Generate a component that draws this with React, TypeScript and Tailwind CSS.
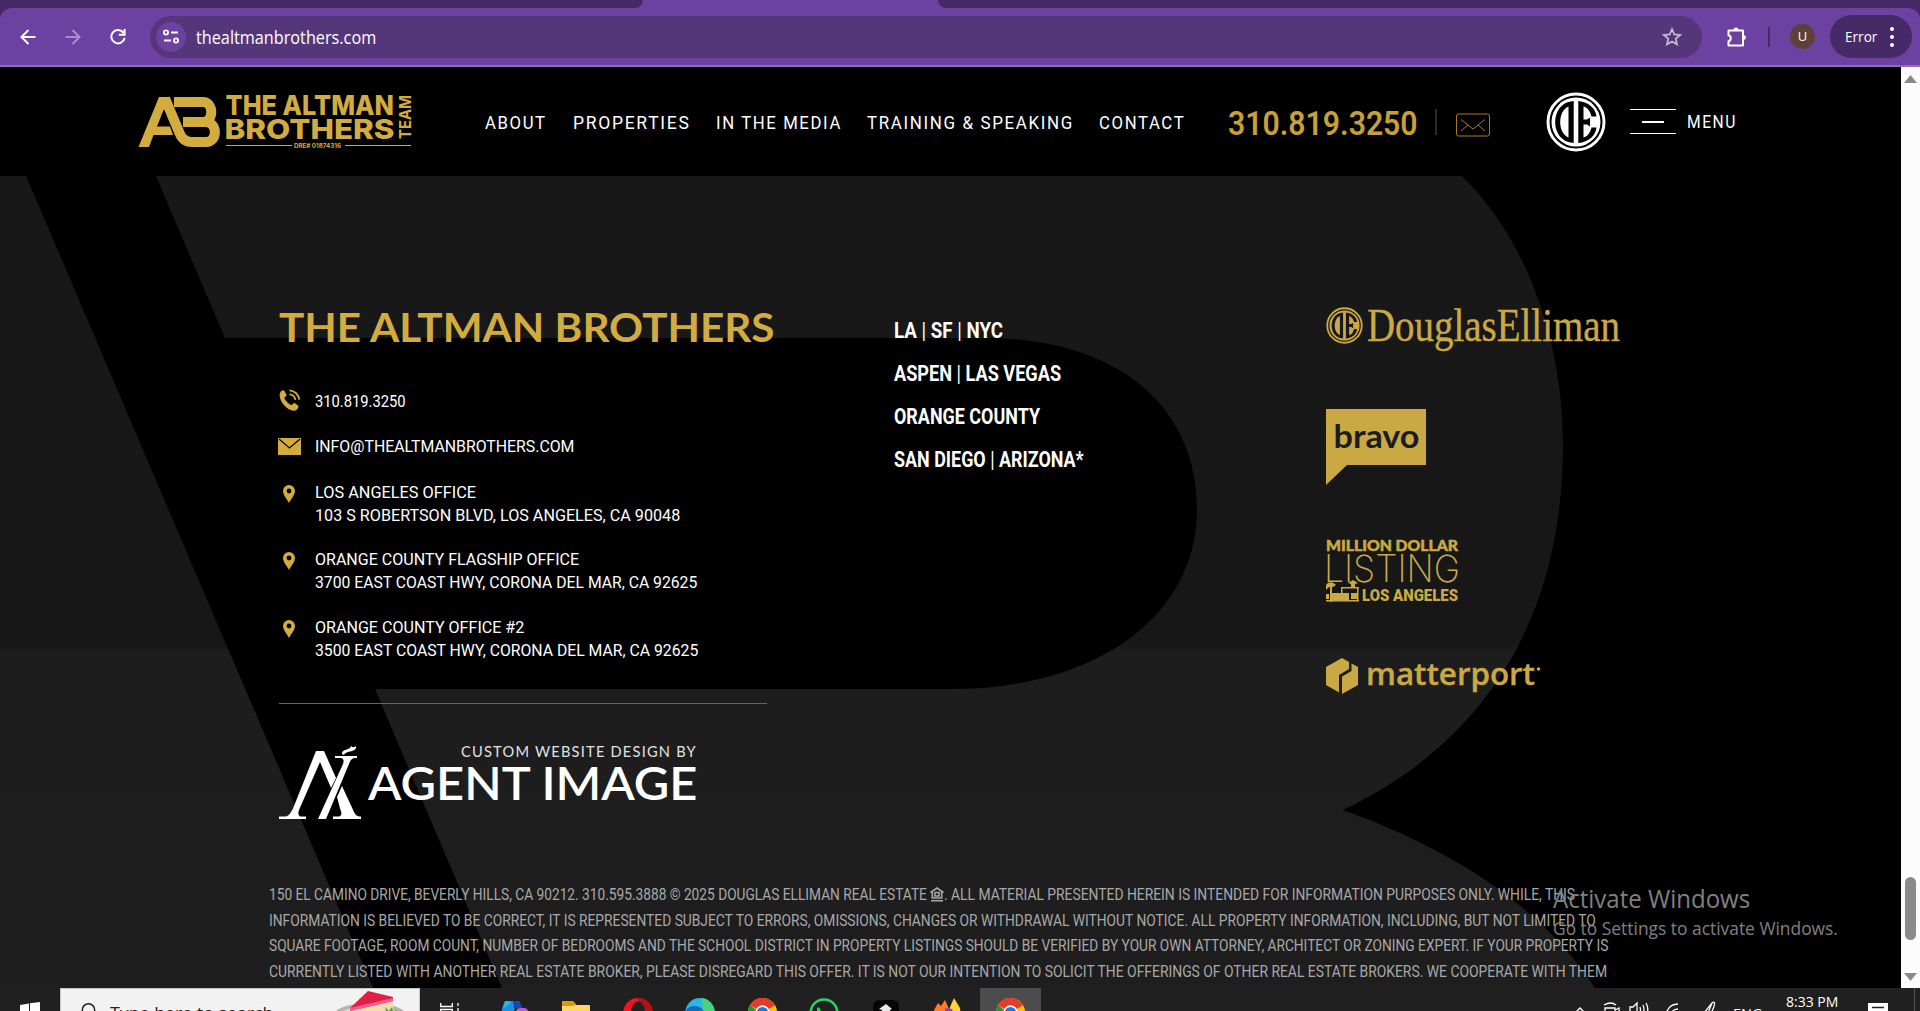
import { useLayoutEffect, useRef, type ReactNode } from "react";

/** Single line of text, condensed or widened to fill the width set in className. */
function Line({ className, children }: { className: string; children: ReactNode }) {
  const box = useRef<HTMLDivElement>(null);
  const text = useRef<HTMLSpanElement>(null);
  useLayoutEffect(() => {
    if (box.current && text.current) {
      const ratio = box.current.clientWidth / text.current.offsetWidth;
      text.current.style.transform = `scaleX(${ratio})`;
    }
  }, []);
  return (
    <div ref={box} className={`shrink-0 whitespace-nowrap ${className}`}>
      <span ref={text} className="inline-block origin-left">
        {children}
      </span>
    </div>
  );
}

function Emblem({ className }: { className: string }) {
  return (
    <svg viewBox="0 0 60 60" className={className} fill="currentColor">
      <circle cx="30" cy="30" r="28" fill="none" stroke="currentColor" strokeWidth="3" />
      <path
        fillRule="evenodd"
        d="M30 5.500a24.500 24.500 0 1 1 0 49 24.500 24.500 0 1 1 0-49ZM27.700 9C3 10 3 50 27.700 51ZM22.500 14.500C11.500 19 11.500 41 22.500 45.500ZM32.300 9V51C43 50 49.500 43.500 50.500 35.500H45.500C44.500 40.500 41.500 44.500 37.500 45.500V32.500H41L44 34.500V25.500L41 27.500H37.500V14.500C41.500 15.500 44.500 19.500 45.500 24.500H50.500C49.500 16.500 43 10 32.300 9Z"
      />
    </svg>
  );
}

function BrandLogo() {
  return (
    <svg width="274" height="54" viewBox="138 95 274 54" className="ml-[138px] shrink-0 overflow-visible tracking-normal" fill="#d3ac3f">
      <path d="M138.500 147 159 97H169L172 105 163.500 110 157 126.500H170L173 135H153.500L149 147Z" />
      <path
        d="M165 98.500 179.500 133Q183 142 192 142H206C218 142 218 122 205 122H183M174 102H203C214 102 214 122 203 122"
        fill="none"
        stroke="#d3ac3f"
        strokeWidth="10"
      />
      <g fontFamily="'Inter','Liberation Sans',sans-serif" fontWeight="700">
        <text x="225.500" y="115.300" fontSize="27.500" fontWeight="800" textLength="168.500" lengthAdjust="spacingAndGlyphs">THE ALTMAN</text>
        <text x="224.500" y="139" fontSize="27.500" fontWeight="800" textLength="170" lengthAdjust="spacingAndGlyphs">BROTHERS</text>
        <text x="294" y="147.500" fontSize="6" textLength="47" lengthAdjust="spacingAndGlyphs">DRE# 01874316</text>
        <text transform="translate(411 139) rotate(-90)" fontSize="16.500" textLength="44" lengthAdjust="spacingAndGlyphs">TEAM</text>
      </g>
      <path d="M226 145h66v1h-66zM345 145h66v1h-66z" />
    </svg>
  );
}

function BrowserBar() {
  return (
    <div className="h-[67px] shrink-0 bg-[#462a68] font-['Open_Sans','Noto_Sans',sans-serif] text-white">
      <div className="flex h-2">
        <div className="w-[631px]" />
        <div className="w-3 bg-[#6c41a1]">
          <div className="h-2 w-3 rounded-br-xl bg-[#462a68]" />
        </div>
        <div className="w-[295px] bg-[#6c41a1]" />
        <div className="w-3 bg-[#6c41a1]">
          <div className="h-2 w-3 rounded-bl-xl bg-[#462a68]" />
        </div>
      </div>
      <div className="flex h-[59px] items-center rounded-t-xl border-b-2 border-[#916bbb] bg-[#6c41a1]">
        <svg width="16" height="16" viewBox="0 0 16 16" className="ml-5 shrink-0" fill="none" stroke="#fff" strokeWidth="2">
          <path d="M8.500 1 1.500 8l7 7M2 8h13.500" />
        </svg>
        <svg width="16" height="16" viewBox="0 0 16 16" className="ml-[29px] shrink-0" fill="none" stroke="#a98fca" strokeWidth="2">
          <path d="m7.500 1 7 7-7 7M14 8H.5" />
        </svg>
        <svg width="16" height="16" viewBox="0 0 16 16" className="ml-[29px] shrink-0" fill="none" stroke="#fff" strokeWidth="2">
          <path d="M13.500 3.800A6.700 6.700 0 1 0 14.600 9M14.600 0v5.800H8.800" />
        </svg>
        <div className="ml-6 flex h-[42px] w-[1552px] items-center rounded-full bg-[#56367a]">
          <div className="ml-[6px] flex size-[30px] items-center justify-center rounded-full bg-[#6c41a1]">
            <svg width="16" height="15" viewBox="0 0 16 15" fill="none" stroke="#fff" strokeWidth="1.800">
              <circle cx="3" cy="3.500" r="2.100" />
              <path d="M8 3.500h7M1 11.500h7" />
              <circle cx="13" cy="11.500" r="2.100" />
            </svg>
          </div>
          <Line className="ml-[10px] w-[180px] text-[17.5px] leading-[42px]">thealtmanbrothers.com</Line>
          <svg width="20" height="20" viewBox="0 0 20 20" className="ml-auto mr-5" fill="none" stroke="#c3b9ce" strokeWidth="1.800">
            <path d="m10 2.200 2.300 5.300 5.700.5-4.300 3.800 1.300 5.700-5-3-5 3 1.300-5.700L2 8l5.700-.5z" />
          </svg>
        </div>
        <svg width="22" height="22" viewBox="0 0 22 22" className="ml-6 shrink-0" fill="none" stroke="#fff" strokeWidth="2">
          <path d="M2.500 4.500h14.500v15H2.500v-4.300c3-.5 3-5.400 0-5.900z" strokeLinejoin="round" />
          <path d="M7.500 4a2.500 2.500 0 0 1 5 0zM17.500 9a2.500 2.500 0 0 1 0 5z" fill="#fff" stroke="none" />
        </svg>
        <div className="ml-5 h-5 w-[2px] bg-[#462a68]" />
        <div className="ml-5 flex size-[25px] items-center justify-center rounded-full bg-[#5d4037] text-[13px]">U</div>
        <div className="ml-[15px] flex h-[43px] w-[82px] items-center rounded-full bg-[#462a68]">
          <Line className="ml-[15px] w-8 text-[14px]">Error</Line>
          <div className="ml-[13px] flex flex-col gap-1">
            <div className="size-1 rounded-full bg-white" />
            <div className="size-1 rounded-full bg-white" />
            <div className="size-1 rounded-full bg-white" />
          </div>
        </div>
      </div>
    </div>
  );
}

function SiteHeader() {
  return (
    <header className="flex h-[109px] shrink-0 items-center bg-black text-[17.5px] leading-6 tracking-[1.7px] text-white">
      <BrandLogo />
      <nav className="ml-[73px] mt-[3px] flex">
        <Line className="w-[62px]">ABOUT</Line>
        <Line className="ml-[26px] w-[118px]">PROPERTIES</Line>
        <Line className="ml-[25px] w-[126px]">IN THE MEDIA</Line>
        <Line className="ml-[25px] w-[207px]">TRAINING &amp; SPEAKING</Line>
        <Line className="ml-[25px] w-[86px]">CONTACT</Line>
      </nav>
      <Line className="ml-[43px] mt-[3px] w-[190px] text-[34px] font-semibold leading-[40px] tracking-normal text-[#c8a03a]">310.819.3250</Line>
      <div className="ml-[17px] h-[26px] w-[2px] bg-[#2b2b2b]" />
      <svg width="34" height="24" viewBox="0 0 34 24" className="ml-[19px] mt-[7px] shrink-0" fill="none" stroke="#a87a1c">
        <rect x=".5" y="1" width="33" height="22" rx="2" />
        <path d="m5 6.500 12 9.500 12-9.500M5 18l7-6M29 18l-7-6" />
      </svg>
      <Emblem className="ml-[56px] mt-px size-[60px] shrink-0 text-white" />
      <div className="ml-6 flex h-[25px] w-[46px] flex-col items-center justify-between">
        <div className="h-px w-full bg-white" />
        <div className="h-[2px] w-[22px] bg-white" />
        <div className="h-px w-full bg-white" />
      </div>
      <Line className="ml-[11px] mt-px w-[50px]">MENU</Line>
    </header>
  );
}

/** Oversized monogram behind the footer. */
function Backdrop() {
  return (
    <svg width="1901" height="812" viewBox="0 176 1901 812" className="absolute inset-0">
      <defs>
        <linearGradient id="tone" x1="0" y1="176" x2="0" y2="988" gradientUnits="userSpaceOnUse">
          <stop offset="0" stopColor="#181818" />
          <stop offset=".575" stopColor="#171717" />
          <stop offset=".588" stopColor="#1d1d1d" />
          <stop offset="1" stopColor="#1e1e1e" />
        </linearGradient>
      </defs>
      <g fill="url(#tone)">
        <path d="M0 176H26L373 988H0Z" />
        <path d="M156 176H1462C1532 245 1563 350 1563 445C1563 600 1500 735 1343 810C1455 850 1545 910 1595 988H502L375 689H950C1105 689 1197 610 1197 510C1197 400 1110 338 985 338H225Z" />
      </g>
    </svg>
  );
}

function Pin() {
  return (
    <svg width="12" height="18" viewBox="0 0 12 18" className="ml-1 mr-5 mt-1 shrink-0" fill="#d3ac3f">
      <path fillRule="evenodd" d="M6 0a6 6 0 0 1 6 6c0 4-4 8-6 12C4 14 0 10 0 6a6 6 0 0 1 6-6Zm0 3.600a2.400 2.400 0 1 0 0 4.800 2.400 2.400 0 0 0 0-4.800Z" />
    </svg>
  );
}

function ContactColumn() {
  return (
    <div className="ml-[279px] w-[615px] shrink-0 text-[17px] leading-[23px] text-white">
      <Line className="mt-[127px] w-[496px] font-['Lato',sans-serif] text-[41px] font-bold leading-[47px] text-[#d3ac3f]">THE ALTMAN BROTHERS</Line>
      <div className="mt-[40px] flex h-[23px]">
        <svg width="22" height="22" viewBox="0 0 22 22" className="mr-3.5 shrink-0 -translate-y-px" fill="#d3ac3f">
          <path d="M1 4C2 1.500 4.500.5 5.500 2l2 4c.5 1-2 2-2 3 0 2 5 7 7 7 1 0 2-2.500 3-2l3.500 2.500c1.500 1-.5 4-2.500 5C9 23.500-1.500 11 1 4Z" />
          <path d="M10.500 1.300c5 .2 9.500 4.500 9.800 9.500M10.500 5.300c3 .2 5.500 2.500 5.800 5.500" fill="none" stroke="#d3ac3f" strokeWidth="1.800" />
        </svg>
        <Line className="w-[91px]">310.819.3250</Line>
      </div>
      <div className="mt-[22px] flex h-[23px] items-center">
        <svg width="23" height="17" viewBox="0 0 23 17" className="mr-3.5 shrink-0 -translate-x-px" fill="#d3ac3f">
          <path d="M0 0h23v17H0z" />
          <path d="m1 1 10.500 9L22 1" fill="none" stroke="#000" strokeWidth="1.200" />
        </svg>
        <Line className="-ml-px w-[259px]">INFO@THEALTMANBROTHERS.COM</Line>
      </div>
      <div className="mt-[23px] flex">
        <Pin />
        <div>
          <Line className="w-[161px]">LOS ANGELES OFFICE</Line>
          <Line className="w-[365px]">103 S ROBERTSON BLVD, LOS ANGELES, CA 90048</Line>
        </div>
      </div>
      <div className="mt-[21px] flex">
        <Pin />
        <div>
          <Line className="w-[264px]">ORANGE COUNTY FLAGSHIP OFFICE</Line>
          <Line className="w-[382px]">3700 EAST COAST HWY, CORONA DEL MAR, CA 92625</Line>
        </div>
      </div>
      <div className="mt-[22px] flex">
        <Pin />
        <div>
          <Line className="w-[209px]">ORANGE COUNTY OFFICE #2</Line>
          <Line className="w-[383px]">3500 EAST COAST HWY, CORONA DEL MAR, CA 92625</Line>
        </div>
      </div>
      <div className="mt-[41px] h-px w-[488px] bg-[#746538]" />
      <div className="mt-[41px] flex font-['Lato',sans-serif]">
        <svg width="82" height="75" viewBox="0 0 82 75" className="shrink-0" fill="#fff">
          <path d="M0 71.500h7c3-1 5-4 7-8L37 6h8l12 27-5 10-11-26-21 48c-1 3-1 5 1 6.500h6V74H0Z" />
          <path d="M56 11h22v2h-3c-3 1-4 3-5 6L47 74h-8l25-55c1-3 1-5-2-6h-6ZM58 52l5-11 12 26c1.500 3 3 4.500 7 4.500V74H54v-2.500h6c3-1 3-3 1-8Z" />
          <path d="M63 9c-1-5 9-4 9-8 2 2 4 1 5 0 1 7-10 4-12 9Z" />
        </svg>
        <div className="ml-[7px]">
          <Line className="ml-[93px] w-[236px] text-[14.5px] leading-[13px] tracking-[1.2px] text-[#e2e2e2]">CUSTOM WEBSITE DESIGN BY</Line>
          <Line className="w-[329px] text-[46px] font-semibold leading-[49px]">AGENT IMAGE</Line>
        </div>
      </div>
    </div>
  );
}

function MarketList() {
  const bar = <span className="font-normal">|</span>;
  return (
    <div className="w-[432px] shrink-0 pt-[133px] text-[21.5px] font-bold leading-[43px] text-white">
      <Line className="w-[109px]">LA {bar} SF {bar} NYC</Line>
      <Line className="w-[167px]">ASPEN {bar} LAS VEGAS</Line>
      <Line className="w-[146px]">ORANGE COUNTY</Line>
      <Line className="w-[190px]">SAN DIEGO {bar} ARIZONA*</Line>
    </div>
  );
}

function PartnersColumn() {
  return (
    <div className="flex shrink-0 flex-col items-start text-[#caa945]">
      <div className="mt-[130px] flex h-[50px]">
        <Emblem className="mt-px size-[37px] shrink-0" />
        <svg width="256" height="50" viewBox="0 0 256 50" className="ml-[3px] overflow-visible" fill="currentColor">
          <text x="1" y="35" fontSize="46" fontFamily="'Liberation Serif',serif" stroke="currentColor" strokeWidth=".4" textLength="253" lengthAdjust="spacingAndGlyphs">DouglasElliman</text>
        </svg>
      </div>
      <svg width="100" height="76" viewBox="0 0 100 76" className="mt-[53px]" fill="currentColor">
        <path d="M0 0h100v56H21L0 76Z" />
        <text x="7.500" y="38.500" fontSize="33" fontWeight="700" fill="#1c1c1c" fontFamily="'Lato',sans-serif" textLength="86" lengthAdjust="spacingAndGlyphs">bravo</text>
      </svg>
      <svg width="134" height="64" viewBox="0 0 134 64" className="mt-[54px] overflow-visible" fill="currentColor">
        <text x="0" y="12" fontSize="14.700" fontWeight="900" fontFamily="'Lato',sans-serif" stroke="currentColor" strokeWidth=".5" textLength="132" lengthAdjust="spacingAndGlyphs">MILLION DOLLAR</text>
        <text x="-2" y="43" fontSize="37.500" fontWeight="200" fontFamily="'Inter',sans-serif" textLength="136" lengthAdjust="spacingAndGlyphs">LISTING</text>
        <text x="36" y="61.500" fontSize="16.500" fontWeight="900" fontFamily="'Roboto',sans-serif" textLength="96" lengthAdjust="spacingAndGlyphs">LOS ANGELES</text>
        <path d="M0 46c3-4 7-3 10 0l-3 2H3l-3 3zM4 48h2v15H4zM6 54h17v7H6zM0 55h3v5H0zM0 61h33v1.500H0zM22 44l5-3 5 3-3 1v3h-4v-3zM15 48h18v1.500H15zM15 48h1.500v6H15zM31 48h1.500v14H31zM25 54h6v6h-6z" />
      </svg>
      <div className="mt-[55px] flex">
        <svg width="32" height="36" viewBox="0 0 32 36" fill="currentColor">
          <path d="M0 9 16 0l7 4v7L13 17v17.500L0 27Z" />
          <path d="M25.500 5.500 32 9v18L16 36V18.500L25.500 13Z" />
        </svg>
        <svg width="180" height="40" viewBox="0 0 180 40" className="ml-[7px]" fill="currentColor">
          <text x="1" y="26.500" fontSize="31" fontWeight="600" fontFamily="'Open Sans',sans-serif" stroke="currentColor" strokeWidth=".4" textLength="169" lengthAdjust="spacingAndGlyphs">matterport</text>
          <circle cx="173.500" cy="11" r="1.800" />
        </svg>
      </div>
    </div>
  );
}

function Disclaimer() {
  return (
    <div className="ml-[269px] mt-[62px] text-[16px] leading-[25.6px] text-[#a9a9a9]">
      <div className="flex">
        <Line className="w-[658px]">150 EL CAMINO DRIVE, BEVERLY HILLS, CA 90212. 310.595.3888 © 2025 DOUGLAS ELLIMAN REAL ESTATE</Line>
        <svg width="14" height="15" viewBox="0 0 14 15" className="ml-[3px] mt-[5px] shrink-0" fill="none" stroke="currentColor" strokeWidth="1.600">
          <path d="M.5 5.500 7 1l6.500 4.500M2.300 5v6h9.400V5M1 13.800h12" />
          <path d="M5 5.500h4V9H5z" />
        </svg>
        <Line className="w-[631px]">. ALL MATERIAL PRESENTED HEREIN IS INTENDED FOR INFORMATION PURPOSES ONLY. WHILE, THIS</Line>
      </div>
      <Line className="w-[1327px]">
        INFORMATION IS BELIEVED TO BE CORRECT, IT IS REPRESENTED SUBJECT TO ERRORS, OMISSIONS, CHANGES OR WITHDRAWAL WITHOUT NOTICE. ALL PROPERTY INFORMATION, INCLUDING, BUT NOT LIMITED TO
      </Line>
      <Line className="w-[1339px]">
        SQUARE FOOTAGE, ROOM COUNT, NUMBER OF BEDROOMS AND THE SCHOOL DISTRICT IN PROPERTY LISTINGS SHOULD BE VERIFIED BY YOUR OWN ATTORNEY, ARCHITECT OR ZONING EXPERT. IF YOUR PROPERTY IS
      </Line>
      <Line className="w-[1338px]">
        CURRENTLY LISTED WITH ANOTHER REAL ESTATE BROKER, PLEASE DISREGARD THIS OFFER. IT IS NOT OUR INTENTION TO SOLICIT THE OFFERINGS OF OTHER REAL ESTATE BROKERS. WE COOPERATE WITH THEM
      </Line>
    </div>
  );
}

function ScrollTrack() {
  return (
    <div className="flex w-[19px] shrink-0 flex-col items-center bg-[#fcfcfc]">
      <svg width="13" height="8" viewBox="0 0 13 8" className="mt-2" fill="#8a8a8a"><path d="M6.500 0 13 8H0Z" /></svg>
      <div className="mt-[794px] h-[63px] w-[11px] rounded-full bg-[#8a8a8a]" />
      <svg width="13" height="8" viewBox="0 0 13 8" className="mt-[33px]" fill="#8a8a8a"><path d="M6.500 8 13 0H0Z" /></svg>
    </div>
  );
}

function ChromeIcon() {
  return (
    <svg width="29" height="29" viewBox="0 0 29 29">
      <circle cx="14.500" cy="14.500" r="14.500" fill="#fbc116" />
      <path d="M14.500 14.500 2 7A14.500 14.500 0 0 1 27 7.200Z" fill="#e33b2e" />
      <path d="M2 7A14.500 14.500 0 0 0 14 29l4-9Z" fill="#229342" />
      <circle cx="14.500" cy="14.500" r="7.200" fill="#fff" />
      <circle cx="14.500" cy="14.500" r="5.600" fill="#1a73e8" />
    </svg>
  );
}

function Taskbar() {
  return (
    <div className="flex h-[23px] shrink-0 items-start overflow-hidden bg-[#202020] font-['Open_Sans','Noto_Sans',sans-serif]">
      <svg width="20" height="20" viewBox="0 0 20 20" className="ml-5 mt-[14px] shrink-0" fill="#fff">
        <path d="m0 3 9-1.500V10H0zM10 1.300 20 0v10H10zM0 11h20v9H0z" />
      </svg>
      <div className="ml-5 flex h-12 w-[360px] shrink-0 items-start border border-[#c4c4c4] bg-[#f2f2f2] text-[#222]">
        <svg width="18" height="20" viewBox="0 0 18 20" className="ml-5 mt-[14px] shrink-0" fill="none" stroke="#222" strokeWidth="1.500">
          <circle cx="7.500" cy="7" r="6.200" />
        </svg>
        <Line className="ml-[11px] mt-[12px] w-[163px] text-[17px] leading-6">Type here to search</Line>
        <svg width="76" height="40" viewBox="0 0 76 40" className="ml-[60px] mt-[2px] shrink-0">
          <ellipse cx="37" cy="25" rx="37" ry="13" fill="#b5b3ab" />
          <ellipse cx="37" cy="26" rx="32" ry="11" fill="#dddbd5" />
          <path d="m17 19 43-9v21H17z" fill="#f6dcae" />
          <path d="M35 0 60 6v4L17 20v-3z" fill="#e01f45" />
          <path d="m17 17 43-10v3L17 20z" fill="#f55b95" />
          <path d="m52 16 4 4 3-4 1 4 4-1-2 6H52l-3-4 4-1z" fill="#4f9a45" />
        </svg>
      </div>
      <svg width="20" height="20" viewBox="0 0 20 20" className="ml-5 mt-[15px] shrink-0" fill="none" stroke="#fff" strokeWidth="1.300">
        <path d="M.7 0v3.500h11.600V0M.7 10V6.500h11.600V10M18 0v3M18 5v10" />
      </svg>
      <svg width="28" height="26" viewBox="0 0 28 26" className="ml-10 mt-[13px] shrink-0">
        <path d="M5 0h14l3 7h-7L9 26H0C0 16 2 5 5 0Z" fill="#1d8fe0" />
        <path d="M3 8c3-3 7-3 8-8H5Z" fill="#31b2df" />
        <path d="M13 0h5c2 1 3 4 4 7h-8z" fill="#1943b8" />
        <rect x="16" y="7" width="12" height="18" rx="4" fill="#b75fd8" />
      </svg>
      <svg width="28" height="24" viewBox="0 0 28 24" className="ml-[34px] mt-[13px] shrink-0">
        <path d="M0 1h11l3 3h14v20H0z" fill="#ffd767" />
        <path d="M0 1Q0 0 1 0h10l3 3-3 2H0z" fill="#dc9a0b" />
      </svg>
      <svg width="30" height="30" viewBox="0 0 30 30" className="ml-[33px] mt-[10px] shrink-0">
        <circle cx="15" cy="15" r="15" fill="#ef1524" />
        <path d="M15 0a15 15 0 0 1 0 30c9-5 9-25 0-27Z" fill="#b3101a" />
        <ellipse cx="15" cy="15" rx="7" ry="11.500" fill="#202020" />
      </svg>
      <svg width="30" height="30" viewBox="0 0 30 30" className="ml-8 mt-[10px] shrink-0">
        <circle cx="15" cy="15" r="15" fill="#2bb7e6" />
        <path d="M17 0a15 15 0 0 1 13 14c-3 7-9 6-12 3z" fill="#49d17c" />
        <path d="M0 14C3 6 16 6 19 14c-5-4-8 0-8 6H0Z" fill="#0f6cbd" />
      </svg>
      <div className="ml-[33px] mt-[10px] shrink-0"><ChromeIcon /></div>
      <svg width="30" height="30" viewBox="0 0 30 30" className="ml-8 mt-[10px] shrink-0" fill="none" stroke="#25d366" strokeWidth="2.600">
        <circle cx="15" cy="15" r="13.500" />
        <path d="M8 10c2-2 3 1 4 3l-1 3-3-1Z" fill="#25d366" stroke="none" />
      </svg>
      <svg width="26" height="26" viewBox="0 0 26 26" className="ml-[34px] mt-3 shrink-0">
        <rect width="26" height="26" rx="6" fill="#050505" />
        <path d="m6 9 7-5 6 5-2 1v3H9v-3z" fill="#e7e7e7" />
      </svg>
      <svg width="29" height="28" viewBox="0 0 29 28" className="ml-[34px] mt-[10px] shrink-0">
        <path d="M1 12 5 5l3 3 4-6 4 9v17H1z" fill="#ff7b25" />
        <path d="m17 9 4-9 6 10 2 18H14z" fill="#ffd33c" />
        <path d="m12 10 7 1 3 8h-9z" fill="#913ed7" />
      </svg>
      <div className="ml-[18px] h-full w-[61px] shrink-0 bg-[#4c4c4c] pl-4 pt-[10px]"><ChromeIcon /></div>
      <svg width="116" height="12" viewBox="0 0 116 12" className="ml-[533px] mt-[14px] shrink-0 overflow-visible" fill="none" stroke="#fff" strokeWidth="1.300">
        <path d="m2 10 4-4 4 4M30 3q7-4 12 0M31 12V6h10v6M41 8l4-2v5M56 10V5h3l4-4v11M66 5q1 3 0 6M69 3q2 5 0 9M72 1q3 5 1 11M93 9c2-4 6-7 11-7M97 12c1-3 3-5 7-5" />
      </svg>
      <svg width="14" height="12" viewBox="0 0 14 12" className="ml-3 mt-[13px] shrink-0" fill="none" stroke="#fff" strokeWidth="1.300">
        <path d="M2 12 10 2c4-3 3 3-1 10M6 12l4-10" />
      </svg>
      <Line className="ml-[17px] mt-[14px] w-[30px] text-[14px] leading-6 text-white">ENG</Line>
      <Line className="ml-[23px] mt-[2px] w-[52px] text-[14.5px] leading-6 text-white">8:33 PM</Line>
      <svg width="20" height="20" viewBox="0 0 20 20" className="ml-[30px] mt-[15px] shrink-0" fill="#fff">
        <path d="M0 0h20v20H0z" />
        <path d="M4 4.500h12" stroke="#202020" strokeWidth="1.500" />
      </svg>
      <div className="ml-[26px] h-full w-px bg-[#555]" />
    </div>
  );
}

export default function App() {
  return (
    <div className="relative flex h-[1011px] w-[1920px] flex-col overflow-hidden bg-black font-['Roboto','Liberation_Sans',sans-serif]">
      <BrowserBar />
      <div className="flex h-[921px] shrink-0">
        <div className="flex w-[1901px] shrink-0 flex-col overflow-hidden">
          <SiteHeader />
          <footer className="relative h-[812px] shrink-0 overflow-hidden">
            <Backdrop />
            <div className="relative">
              <div className="flex h-[644px]">
                <ContactColumn />
                <MarketList />
                <PartnersColumn />
              </div>
              <Disclaimer />
            </div>
          </footer>
        </div>
        <ScrollTrack />
      </div>
      <Taskbar />
      <div className="absolute left-[1553px] top-[882px] font-['Open_Sans','Noto_Sans',sans-serif] text-[#808080]">
        <Line className="w-[197px] text-[25px] leading-8">Activate Windows</Line>
        <Line className="w-[285px] text-[18px] leading-7">Go to Settings to activate Windows.</Line>
      </div>
    </div>
  );
}
